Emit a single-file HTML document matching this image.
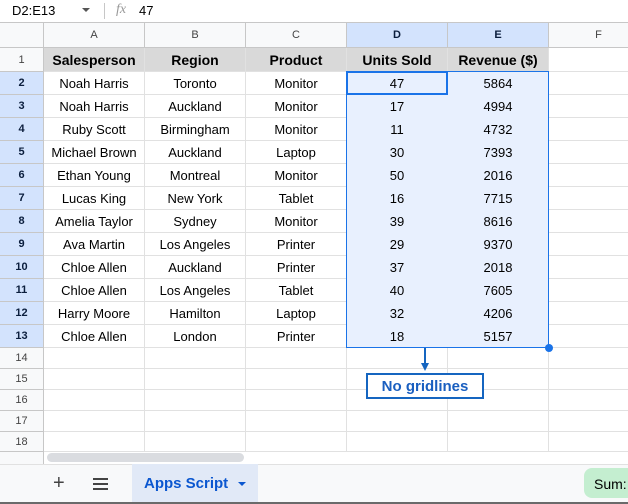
<!DOCTYPE html>
<html><head><style>
*{box-sizing:border-box;margin:0;padding:0}
body{width:628px;height:504px;overflow:hidden;background:#fff;font-family:"Liberation Sans",Arial,sans-serif;position:relative}
.c{position:absolute;border-right:1px solid #e1e1e1;border-bottom:1px solid #e1e1e1;display:flex;align-items:center;justify-content:center;font-size:13px;color:#000;white-space:nowrap;overflow:hidden}
.h{background:#f8f9fa;color:#444;font-size:11px;border-color:#c7c7c7}
.hs{background:#d3e3fd;color:#0b1e3d;font-weight:bold}
.r1{background:#d9d9d9;font-weight:bold;font-size:14px}
.sel{background:#e8f0fe;border-color:#e8f0fe}
</style></head><body>
<!-- formula bar -->
<div style="position:absolute;left:0;top:0;width:628px;height:23px;border-bottom:1px solid #c7c7c7;font-size:13px;color:#000">
<span style="position:absolute;left:12px;top:3px">D2:E13</span>
<span style="position:absolute;left:82px;top:8px;width:0;height:0;border-left:4px solid transparent;border-right:4px solid transparent;border-top:4px solid #555"></span>
<span style="position:absolute;left:104px;top:3px;width:1px;height:16px;background:#c7c7c7"></span>
<span style="position:absolute;left:116px;top:2px;font-style:italic;font-family:'Liberation Serif',serif;color:#999;font-size:14px">fx</span>
<span style="position:absolute;left:139px;top:3px">47</span>
</div>
<div id="g"></div>
<!-- selection border -->
<div style="position:absolute;left:346px;top:71px;width:203px;height:277px;border:1px solid #1a73e8"></div>
<div style="position:absolute;left:346px;top:71px;width:102px;height:24px;border:2px solid #1a73e8"></div>
<div style="position:absolute;left:545px;top:344px;width:8px;height:8px;border-radius:50%;background:#1a73e8"></div>
<!-- annotation -->
<div style="position:absolute;left:424px;top:348px;width:2px;height:18px;background:#1565c0"></div>
<div style="position:absolute;left:421px;top:363px;width:0;height:0;border-left:4px solid transparent;border-right:4px solid transparent;border-top:8px solid #1565c0"></div>
<div style="position:absolute;left:366px;top:373px;width:118px;height:26px;border:2px solid #1565c0;background:#fff;color:#1a5fc0;font-weight:bold;font-size:15px;display:flex;align-items:center;justify-content:center">No gridlines</div>
<!-- scrollbar -->
<div style="position:absolute;left:0;top:452px;width:628px;height:12px;background:#fff"></div>
<div style="position:absolute;left:0;top:452px;width:44px;height:12px;border-right:1px solid #c7c7c7;background:#f8f9fa"></div>
<div style="position:absolute;left:47px;top:453px;width:197px;height:9px;border-radius:5px;background:#dadce0"></div>
<!-- bottom bar -->
<div style="position:absolute;left:0;top:464px;width:628px;height:38px;background:#f8f9fa;border-top:1px solid #e1e1e1"></div>
<div style="position:absolute;left:53px;top:472px;font-size:20px;color:#444">+</div>
<div style="position:absolute;left:93px;top:478px;width:15px;height:2px;background:#444;box-shadow:0 5px 0 #444,0 10px 0 #444"></div>
<div style="position:absolute;left:132px;top:464px;width:126px;height:38px;background:#e1e9f7"></div>
<div style="position:absolute;left:144px;top:475px;font-size:15px;font-weight:bold;color:#0b57d0">Apps Script</div>
<div style="position:absolute;left:238px;top:482px;width:0;height:0;border-left:4px solid transparent;border-right:4px solid transparent;border-top:4px solid #0b57d0"></div>
<div style="position:absolute;left:584px;top:468px;width:60px;height:30px;border-radius:8px;background:#c4eed0;font-size:14px;padding:8px 0 0 10px;color:#000">Sum:</div>
<div style="position:absolute;left:0;top:502px;width:628px;height:2px;background:#6a6a6a"></div>
<script>
var cols=[0,44,145,246,347,448,549,649];
var rows=[23,48,72,95,118,141,164,187,210,233,256,279,302,325,348,369,390,411,432,452];
var data=[["Salesperson","Region","Product","Units Sold","Revenue ($)",""],
["Noah Harris","Toronto","Monitor","47","5864"],["Noah Harris","Auckland","Monitor","17","4994"],["Ruby Scott","Birmingham","Monitor","11","4732"],["Michael Brown","Auckland","Laptop","30","7393"],["Ethan Young","Montreal","Monitor","50","2016"],["Lucas King","New York","Tablet","16","7715"],["Amelia Taylor","Sydney","Monitor","39","8616"],["Ava Martin","Los Angeles","Printer","29","9370"],["Chloe Allen","Auckland","Printer","37","2018"],["Chloe Allen","Los Angeles","Tablet","40","7605"],["Harry Moore","Hamilton","Laptop","32","4206"],["Chloe Allen","London","Printer","18","5157"]];
var L="ABCDEF",h="";
function cell(x,y,w,hh,cls,t){h+='<div class="c '+cls+'" style="left:'+x+'px;top:'+y+'px;width:'+w+'px;height:'+hh+'px">'+t+'</div>';}
for(var r=0;r<rows.length-1;r++){
 var y=rows[r],hh=rows[r+1]-y;
 for(var c=0;c<cols.length-1;c++){
  var x=cols[c],w=cols[c+1]-x,cls="",t="";
  if(r==0){cls="h";if(c>0)t=L[c-1];if(c==4||c==5)cls+=" hs";}
  else if(c==0){cls="h";t=r;if(r>=2&&r<=13)cls+=" hs";}
  else{var d=data[r-1];if(d)t=d[c-1]||"";if(r==1&&c<=5)cls="r1";if(r>=2&&r<=13&&(c==4||c==5))cls="sel";}
  cell(x,y,w,hh,cls,t);
 }}
document.getElementById("g").innerHTML=h;
</script>
</body></html>
